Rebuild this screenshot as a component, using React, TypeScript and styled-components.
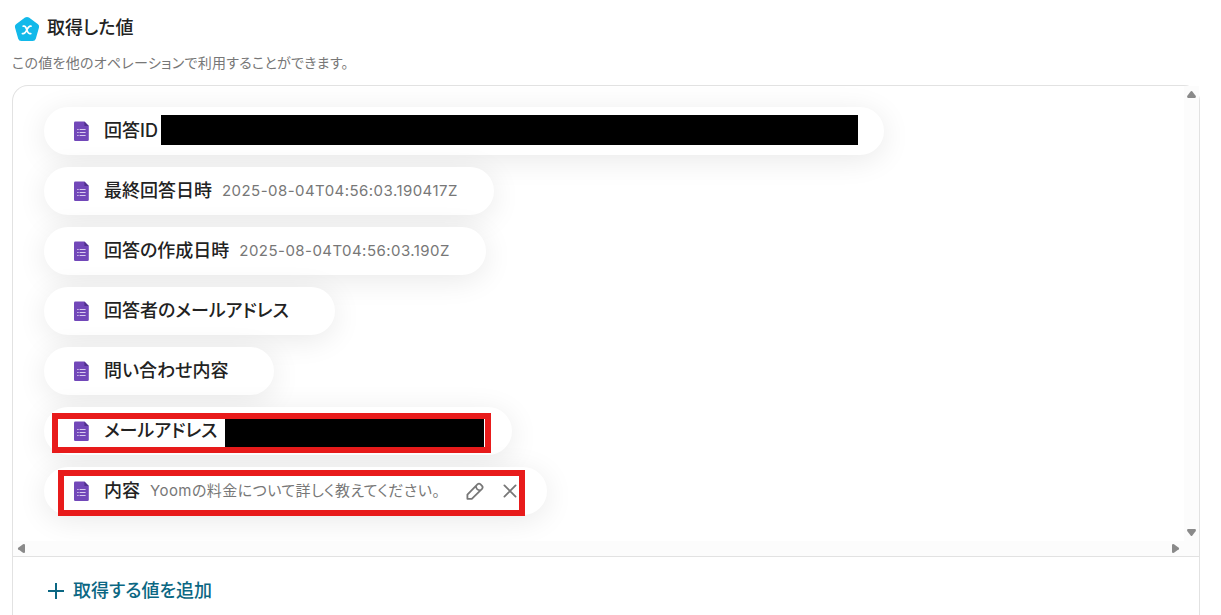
import React from "react";
import styled, { createGlobalStyle } from "styled-components";

const GlobalStyle = createGlobalStyle`
  *, *::before, *::after { box-sizing: border-box; }
  body {
    margin: 0;
    background: #fff;
    color: #222;
    font-family: Inter, "Noto Sans CJK JP", sans-serif;
    font-feature-settings: "palt";
    overflow: hidden;
  }
`;

const Page = styled.main`
  display: flex;
  flex-direction: column;
  height: 100vh;
  padding: 16px 21px 0 12px;
`;

const Header = styled.header`
  display: flex;
  align-items: center;
  gap: 7px;
  height: 24px;
  padding-left: 2px;

  svg { flex: none; margin-top: 2px; }
`;

const Title = styled.h1`
  margin: 0;
  font-size: 18px;
  line-height: 24px;
  font-weight: 500;
`;

const Description = styled.p`
  margin: 12px 0;
  font-size: 14px;
  line-height: 21px;
  color: #777;
  letter-spacing: 0.02em;
`;

const Panel = styled.section`
  display: flex;
  flex: 1;
  flex-direction: column;
  border: 1px solid #e2e2e2;
  border-bottom: 0;
  border-radius: 16px 16px 0 0;
`;

const ScrollArea = styled.div`
  display: grid;
  grid-template-columns: 1fr 15px;
  grid-template-rows: 1fr 15px;
  border-bottom: 1px solid #e2e2e2;
`;

const List = styled.ul`
  display: flex;
  flex-direction: column;
  align-items: flex-start;
  gap: 12px;
  margin: 0;
  padding: 21px 31px 26px;
  list-style: none;
  overflow: hidden;
  border-top-left-radius: 15px;
`;

const Track = styled.div<{ $axis: "x" | "y" }>`
  display: flex;
  flex-direction: ${(p) => (p.$axis === "x" ? "row" : "column")};
  align-items: center;
  justify-content: space-between;
  padding: ${(p) => (p.$axis === "x" ? "0 4px" : "4px 0")};
  background: #fcfcfc;
`;

const Corner = styled.div`
  background: #fcfcfc;
`;

const Arrow = styled.button`
  display: flex;
  padding: 0;
  border: 0;
  background: none;
  color: #8a8a8a;
`;

const Pill = styled.li`
  position: relative;
  display: flex;
  align-items: center;
  height: 48px;
  padding: 0 36px 0 28px;
  border-radius: 24px;
  background: #fff;
  box-shadow: 0 5px 30px rgba(0, 0, 0, 0.09);
  white-space: nowrap;
`;

const Label = styled.span`
  margin: 0 10px 0 13px;
  font-size: 18px;
  line-height: 24px;
  font-weight: 500;
`;

const Value = styled.span`
  font-size: 15px;
  line-height: 24px;
  color: #777;
  letter-spacing: 0.03em;
`;

const HiddenValue = styled.span<{ $width: number }>`
  width: ${(p) => p.$width}px;
`;

const Redaction = styled.span<{ $left: number; $right: number; $top: number; $height: number }>`
  position: absolute;
  left: ${(p) => p.$left}px;
  right: ${(p) => p.$right}px;
  top: ${(p) => p.$top}px;
  height: ${(p) => p.$height}px;
  background: #000;
`;

const Highlight = styled.span<{ $left: number; $right: number; $top: number; $height: number }>`
  position: absolute;
  left: ${(p) => p.$left}px;
  right: ${(p) => p.$right}px;
  top: ${(p) => p.$top}px;
  height: ${(p) => p.$height}px;
  border: 6px solid #e81b1b;
  pointer-events: none;
`;

const Actions = styled.span`
  display: flex;
  gap: 17px;
  margin: 0 -8px 0 26px;
`;

const IconButton = styled.button`
  display: flex;
  padding: 0;
  border: 0;
  background: none;
  color: #777;
`;

const Footer = styled.footer`
  padding: 22px 34px;
`;

const AddButton = styled.button`
  display: flex;
  align-items: center;
  gap: 8px;
  padding: 0;
  border: 0;
  background: none;
  color: #0b6783;
  font: inherit;
  font-size: 18px;
  line-height: 24px;
  font-weight: 500;
`;

const PentagonIcon = () => (
  <svg width="26" height="26" viewBox="0 0 26 26" aria-hidden="true">
    <path
      d="M11 1.6Q13 .2 15 1.6L24 8.2Q25.6 9.6 25 11.6L21.8 22.8Q21.1 25 18.7 25H7.3Q4.9 25 4.2 22.8L1 11.6Q.4 9.6 2 8.2Z"
      fill="#12b9ea"
    />
    <path
      d="M9.2 10.2H10.2C13 10.2 12.6 17.6 15.6 17.6H16.8M17 10.2H16.4C14.4 10.2 13.6 12.6 12.9 13.9C12 15.6 11.2 17.6 9.2 17.6H8.4"
      fill="none"
      stroke="#fff"
      strokeWidth="1.7"
      strokeLinecap="round"
    />
  </svg>
);

const FormIcon = () => (
  <svg width="19" height="20" viewBox="0 0 19 20" aria-hidden="true">
    <path d="M3.3 .6H12.4L16.8 5V18.7Q16.8 20 15.5 20H3.3Q2 20 2 18.7V1.9Q2 .6 3.3 .6Z" fill="#7248b9" />
    <path d="M12.4 .6L16.8 5H12.4Z" fill="#50318c" />
    <path d="M5.2 8.5H6.6M5.2 11.5H6.6M5.2 14.5H6.6M7.6 8.5H13.6M7.6 11.5H13.6M7.6 14.5H13.6" stroke="#d9cbee" strokeWidth="1.2" />
  </svg>
);

const PencilIcon = () => (
  <svg width="18" height="18" viewBox="0 0 18 18" fill="none" stroke="currentColor" strokeWidth="1.8" strokeLinejoin="round" aria-hidden="true">
    <path d="M1.4 16.8V12.6L11.4 2.4Q13 .9 14.6 2.4L16 3.8Q17.3 5.3 16 6.8L5.8 16.8ZM10 4.2C10.2 6.6 11.8 8.2 14.2 8.4" />
  </svg>
);

const CloseIcon = () => (
  <svg width="18" height="18" viewBox="0 0 18 18" fill="none" stroke="currentColor" strokeWidth="1.8" strokeLinecap="round" aria-hidden="true">
    <path d="M3.4 3.4L14.6 14.6M14.6 3.4L3.4 14.6" />
  </svg>
);

const PlusIcon = () => (
  <svg width="18" height="18" viewBox="0 0 18 18" fill="none" stroke="currentColor" strokeWidth="2" aria-hidden="true">
    <path d="M9 1V17M1 9H17" />
  </svg>
);

const rotations = { up: 0, right: 90, down: 180, left: 270 };

const ArrowButton = ({ to, label }: { to: keyof typeof rotations; label: string }) => (
  <Arrow type="button" aria-label={label}>
    <svg width="9" height="9" viewBox="0 0 9 9" aria-hidden="true">
      <path d="M3.8 1.2Q4.5.6 5.2 1.2L8.8 6Q9.2 8 8 8H1Q-.2 8 .2 6Z" fill="currentColor" transform={`rotate(${rotations[to]} 4.5 4.5)`} />
    </svg>
  </Arrow>
);

export default function App() {
  return (
    <>
      <GlobalStyle />
      <Page>
        <Header>
          <PentagonIcon />
          <Title>取得した値</Title>
        </Header>
        <Description>この値を他のオペレーションで利用することができます。</Description>
        <Panel>
          <ScrollArea>
            <List>
              <Pill>
                <FormIcon />
                <Label>回答ID</Label>
                <HiddenValue $width={680} />
                <Redaction $left={117} $right={26} $top={8} $height={30} />
              </Pill>
              <Pill>
                <FormIcon />
                <Label>最終回答日時</Label>
                <Value>2025-08-04T04:56:03.190417Z</Value>
              </Pill>
              <Pill>
                <FormIcon />
                <Label>回答の作成日時</Label>
                <Value>2025-08-04T04:56:03.190Z</Value>
              </Pill>
              <Pill>
                <FormIcon />
                <Label>回答者のメールアドレス</Label>
              </Pill>
              <Pill>
                <FormIcon />
                <Label>問い合わせ内容</Label>
              </Pill>
              <Pill>
                <FormIcon />
                <Label>メールアドレス</Label>
                <HiddenValue $width={249} />
                <Redaction $left={181} $right={28} $top={12} $height={28} />
                <Highlight $left={8} $right={21} $top={6} $height={40} />
              </Pill>
              <Pill>
                <FormIcon />
                <Label>内容</Label>
                <Value>Yoomの料金について詳しく教えてください。</Value>
                <Actions>
                  <IconButton type="button" aria-label="編集">
                    <PencilIcon />
                  </IconButton>
                  <IconButton type="button" aria-label="削除">
                    <CloseIcon />
                  </IconButton>
                </Actions>
                <Highlight $left={14} $right={22} $top={3} $height={46} />
              </Pill>
            </List>
            <Track $axis="y">
              <ArrowButton to="up" label="上へスクロール" />
              <ArrowButton to="down" label="下へスクロール" />
            </Track>
            <Track $axis="x">
              <ArrowButton to="left" label="左へスクロール" />
              <ArrowButton to="right" label="右へスクロール" />
            </Track>
            <Corner />
          </ScrollArea>
          <Footer>
            <AddButton type="button">
              <PlusIcon />
              取得する値を追加
            </AddButton>
          </Footer>
        </Panel>
      </Page>
    </>
  );
}
